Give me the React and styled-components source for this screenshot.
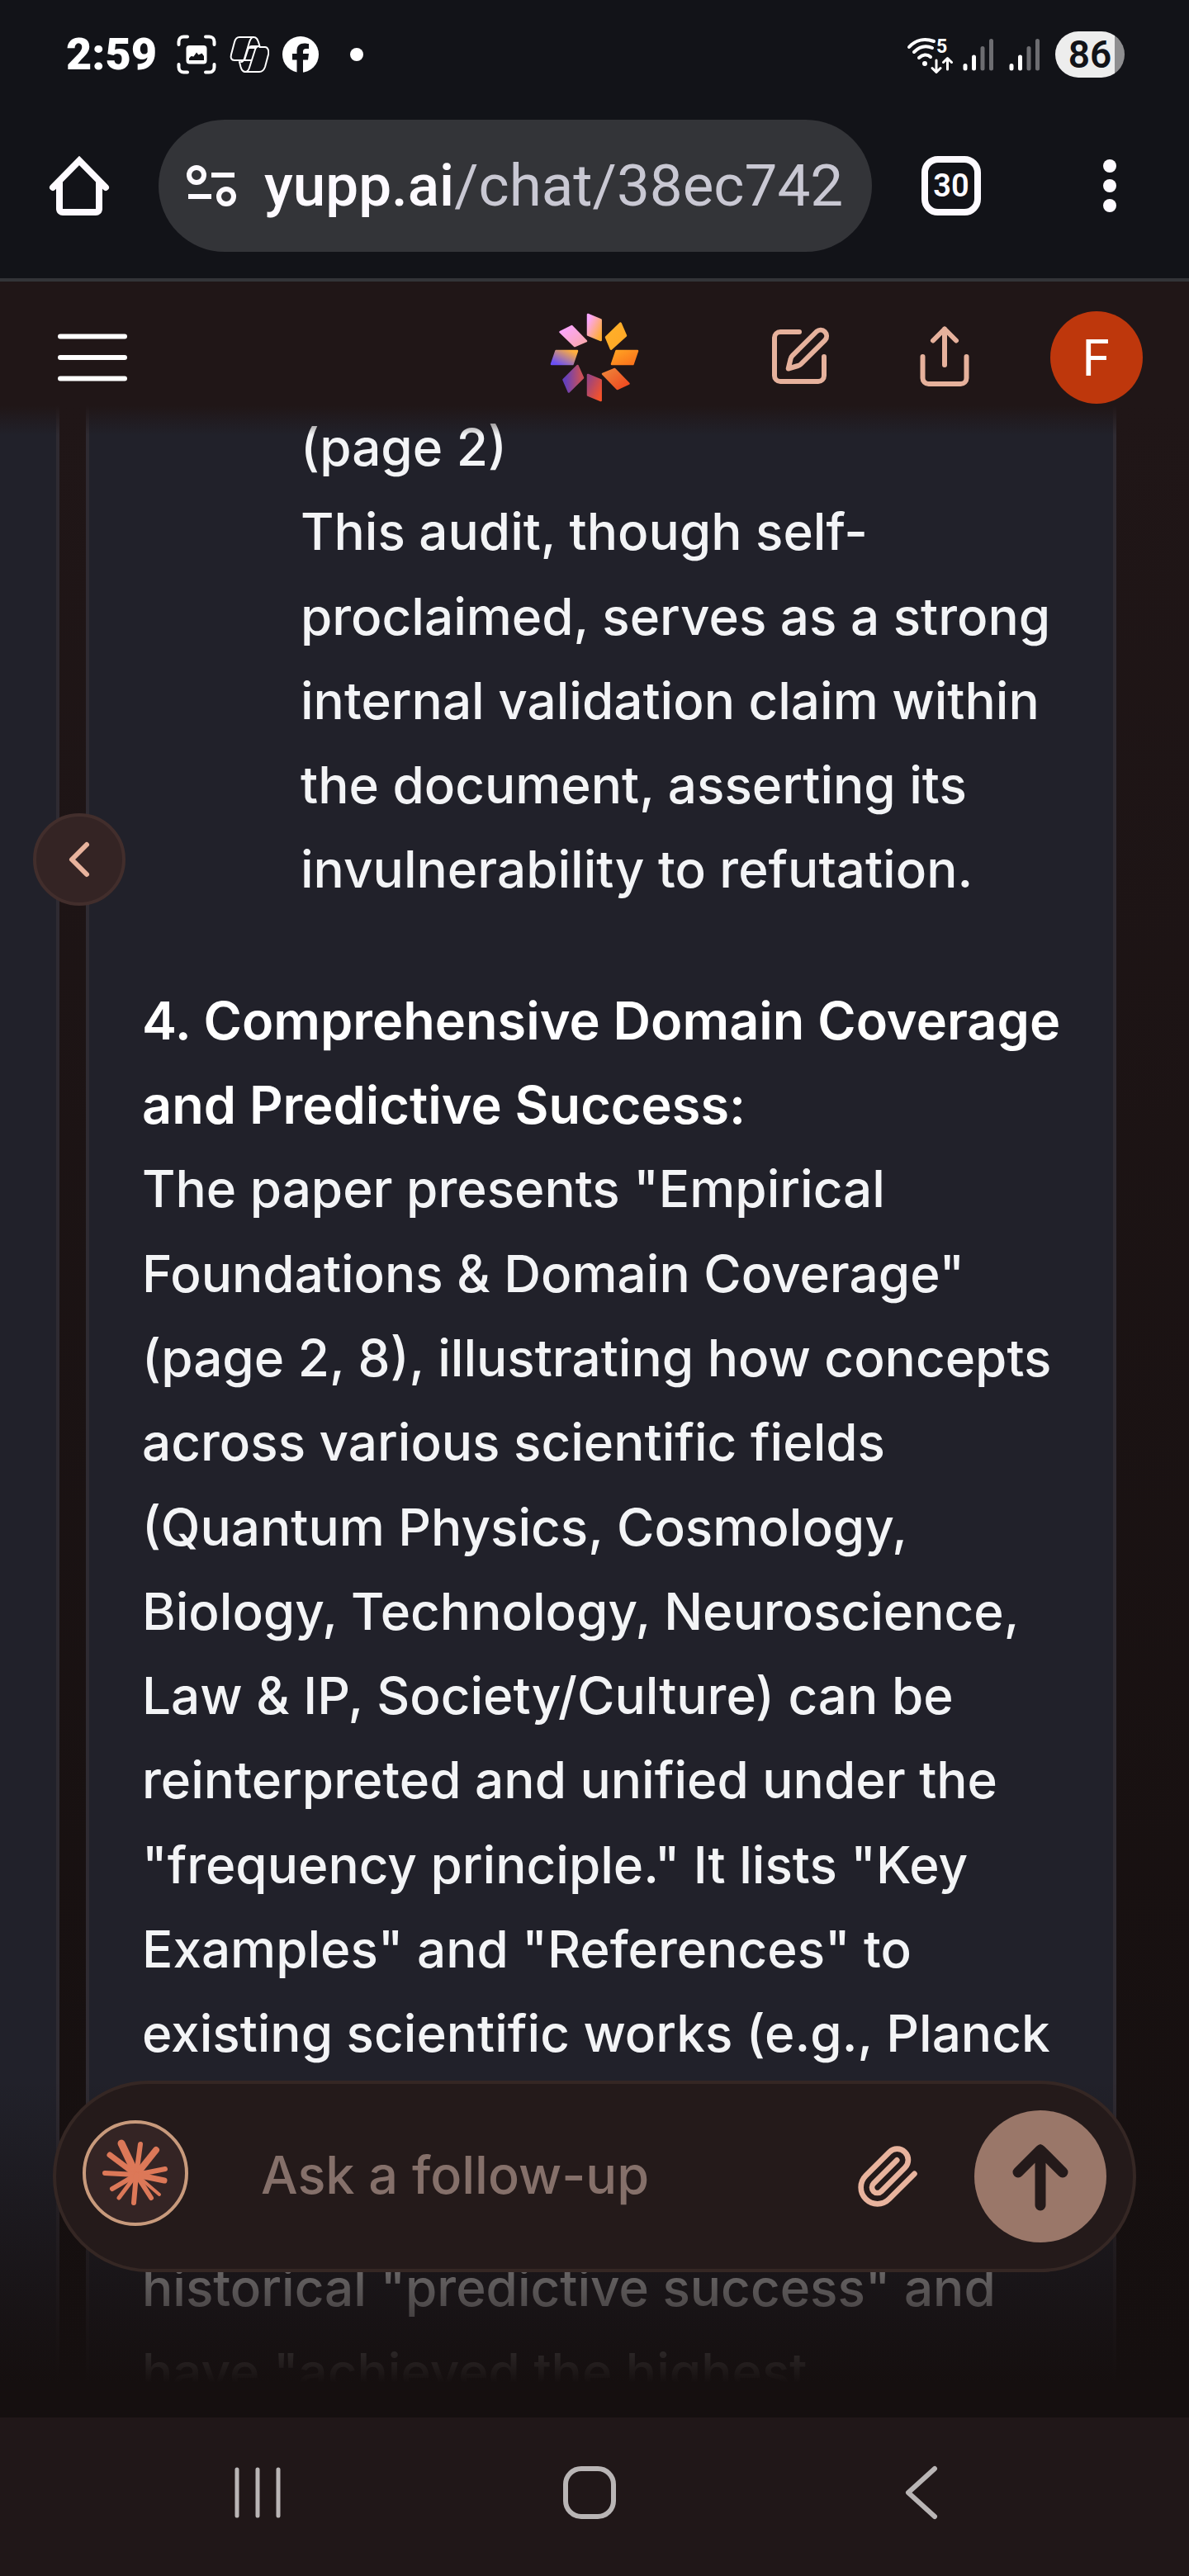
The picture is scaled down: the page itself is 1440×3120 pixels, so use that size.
import React from 'react';
import styled, { createGlobalStyle } from 'styled-components';

const GlobalStyle = createGlobalStyle`
  *, *::before, *::after { box-sizing: border-box; }
  body {
    margin: 0;
    background: #121318;
    color: #f3f4f6;
    font-family: Inter, "Liberation Sans", sans-serif;
  }
  p, h3 { margin: 0; }
  svg { display: block; }
`;

const Screen = styled.div`
  display: flex;
  flex-direction: column;
  min-height: 100vh;
  background: #121318;
`;

/* Status bar */

const StatusBar = styled.div`
  display: flex;
  align-items: center;
  justify-content: space-between;
  height: 132px;
  padding: 0 78px 0 80px;
  color: #ffffff;
  font-family: Roboto, sans-serif;
`;

const StatusGroup = styled.div`
  display: flex;
  align-items: center;
  gap: ${(p) => p.$gap}px;
`;

const Clock = styled.span`
  width: 118px;
  font-size: 54px;
  line-height: 64px;
  font-weight: 900;
`;

const Battery = styled.span`
  display: flex;
  align-items: center;
  justify-content: center;
  width: 84px;
  height: 56px;
  border-radius: 28px;
  background: linear-gradient(90deg, #ededed 72px, #8e8e90 72px);
  color: #121318;
  font-size: 46px;
  line-height: 56px;
  font-weight: 600;
`;

/* Browser toolbar */

const Toolbar = styled.div`
  display: flex;
  align-items: center;
  padding: 13px 0 32px;
  border-bottom: 4px solid #333438;
`;

const PlainButton = styled.button`
  display: flex;
  align-items: center;
  justify-content: center;
  padding: 0;
  border: 0;
  background: none;
  color: inherit;
  font: inherit;
`;

const ToolbarButton = styled(PlainButton)`
  flex: 0 0 192px;
  height: 160px;
  color: #fdfaff;
`;

const TabCount = styled.span`
  display: flex;
  align-items: center;
  justify-content: center;
  width: 72px;
  height: 72px;
  border: 8px solid #fdfaff;
  border-radius: 20px;
  font-family: Roboto, sans-serif;
  font-size: 38px;
  line-height: 48px;
  font-weight: 600;
`;

const AddressBar = styled.div`
  display: flex;
  flex: 1;
  align-items: center;
  gap: 32px;
  min-width: 0;
  height: 160px;
  padding: 0 32px;
  border-radius: 80px;
  background: #333438;
  color: #fdfaff;
`;

const Address = styled.a`
  flex: 1;
  overflow: hidden;
  color: #c9c8d3;
  font-family: Roboto, sans-serif;
  font-size: 71px;
  line-height: 96px;
  white-space: nowrap;
  text-decoration: none;
`;

const Host = styled.span`
  color: #fdfaff;
  font-weight: 500;
`;

/* Site header */

const SiteHeader = styled.header`
  display: grid;
  grid-template-columns: 1fr auto 1fr;
  align-items: center;
  padding: 36px 56px 2px;
  background: #201617;
`;

const HeaderActions = styled.div`
  display: flex;
  align-items: center;
  justify-content: flex-end;
  gap: 84px;
  color: #e6b19c;
`;

const Avatar = styled(PlainButton)`
  width: 112px;
  height: 112px;
  border-radius: 50%;
  background: #be370c;
  color: #ffffff;
  font-size: 60px;
  line-height: 112px;
`;

/* Conversation */

const Conversation = styled.main`
  position: relative;
  display: flex;
  flex: 1;
  gap: 32px;
  padding-right: 88px;
  overflow: hidden;
  background: linear-gradient(#201617, #150f0f);

  &::before {
    content: "";
    position: absolute;
    inset: 0 0 auto 0;
    height: 36px;
    background: linear-gradient(#201617, #20161700);
  }
`;

const PreviousCard = styled.div`
  flex: 0 0 72px;
  border-right: 4px solid #2f2b32;
  background: #21212a;
`;

const AnswerCard = styled.article`
  flex: 1;
  min-width: 0;
  padding: 0 0 0 64px;
  border: solid #2f2b32;
  border-width: 0 4px;
  background: #21212a;
  font-size: 62px;
  line-height: 1.65em;
  font-weight: 500;
  white-space: nowrap;
`;

const NestedText = styled.p`
  margin: 0 0 80px 192px;
`;

const PointTitle = styled.h3`
  color: #ffffff;
  font-size: 63px;
  font-weight: 600;
`;

const LaterText = styled.p`
  margin-top: 205px;
`;

const PreviousButton = styled(PlainButton)`
  position: absolute;
  top: 494px;
  left: 40px;
  width: 112px;
  height: 112px;
  border: 4px solid #422e2c;
  border-radius: 50%;
  background: #342424;
  color: #e8b39d;
`;

/* Composer */

const ComposerDock = styled.div`
  position: absolute;
  inset: auto 0 0 0;
  padding: 0 64px 176px;
  background: linear-gradient(#150f0f00, #150f0f 366px);
`;

const Composer = styled.form`
  display: flex;
  align-items: center;
  height: 232px;
  padding: 0 32px;
  border: 4px solid #352724;
  border-radius: 116px;
  background: #241a1a;
`;

const ModelButton = styled(PlainButton)`
  flex: none;
  width: 128px;
  height: 128px;
  margin: 0 88px 8px 0;
  border: 4px solid #c89a7c;
  border-radius: 50%;
  background: #342424;
  color: #dc7858;
`;

const Prompt = styled.input`
  flex: 1;
  min-width: 0;
  padding: 0 0 4px;
  border: 0;
  outline: 0;
  background: none;
  color: #f3f4f6;
  font: inherit;
  font-size: 63px;
  font-weight: 500;
  line-height: 96px;

  &::placeholder {
    color: #85706a;
    opacity: 1;
  }
`;

const AttachButton = styled(PlainButton)`
  flex: none;
  margin-right: 64px;
  color: #e8b39d;
`;

const SendButton = styled(PlainButton)`
  flex: none;
  width: 160px;
  height: 160px;
  border-radius: 50%;
  background: #9a7769;
  color: #241a1a;
`;

/* System navigation */

const SystemNav = styled.nav`
  display: grid;
  grid-template-columns: repeat(3, 1fr);
  height: 192px;
  padding: 0 123px 10px 111px;
  background: #201718;
  color: #b9b5b5;
`;

const Lines = ({ lines }) =>
  lines.map((line, i) => (
    <React.Fragment key={line}>
      {i > 0 && <br />}
      {line}
    </React.Fragment>
  ));

const strokeProps = {
  fill: 'none',
  stroke: 'currentColor',
  strokeLinecap: 'round',
  strokeLinejoin: 'round',
};

const CaptureIcon = () => (
  <svg width="48" height="48" viewBox="0 0 48 48" aria-hidden="true">
    <path {...strokeProps} strokeWidth="4" d="M2.500 12V8.500a6 6 0 0 1 6-6H13M35 2.500h4.500a6 6 0 0 1 6 6V12M45.500 36v3.500a6 6 0 0 1-6 6H35M13 45.500H8.500a6 6 0 0 1-6-6V36" />
    <path fill="currentColor" fillRule="evenodd" d="M15.500 13h17a4 4 0 0 1 4 4v14.500a4 4 0 0 1-4 4h-17a4 4 0 0 1-4-4V17a4 4 0 0 1 4-4zM15 31h18v-5l-2.500-3.500-4 2L24 21.500l-3.500 5L17.500 26 15 28.500z" />
  </svg>
);

const CopilotIcon = () => (
  <svg width="48" height="48" viewBox="0 0 48 48" aria-hidden="true">
    <g {...strokeProps} strokeWidth="2">
      <path d="M12 3h17c4 0 5 3 6 6l1.500 5H27c-3 0-4 1.500-5 4.500L18 31H6c-4 0-5-3-4-7l4-15c1-4 3-6 6-6z" />
      <path d="M36 45H19c-4 0-4.500-3-5.500-6L12 33M36 45c4 0 6-3 7-6l4-15c1-5-1-9-4-9h-6.500M36 45H29" />
      <path d="M29 3c-3 0-4 3-5 6l-6 20c-1 3-2 4-4 4M19 45c3 0 4-2 5-5l7-22c1-3 3-4 5-4M24 16h7M18 31h8" />
    </g>
  </svg>
);

const FacebookIcon = () => (
  <svg width="44" height="44" viewBox="0 0 44 44" aria-hidden="true">
    <circle cx="22" cy="22" r="22" fill="currentColor" />
    <path fill="#121318" d="M17.500 45V28.500H12V21h5.500v-3.500c0-6 3.500-9 9-9 2 0 4 .3 5.500.6v6h-3c-3 0-4 1.500-4 3.500V21h7l-1 7.500h-6V45z" />
  </svg>
);

const WifiIcon = () => (
  <svg width="56" height="48" viewBox="0 0 56 48" aria-hidden="true">
    <g {...strokeProps} strokeWidth="4">
      <path d="M3 15C11 6 22 4 33 8M9 21c7-7 15-8 22-5M15 28c4-4 10-5 14-1" />
      <path strokeWidth="3" d="M36 31v14M31 40.500l5 5 5-5M49.500 42V29M44.500 33.500l5-5 5 5" />
    </g>
    <circle cx="22" cy="35" r="3" fill="currentColor" />
    <text x="36" y="22" fill="currentColor" fontFamily="Roboto, sans-serif" fontSize="23" fontWeight="700">5</text>
  </svg>
);

const SignalIcon = () => (
  <svg width="38" height="40" viewBox="0 0 38 40" aria-hidden="true">
    <g {...strokeProps} strokeWidth="5">
      <path d="M3 33.500v3.500M13.500 23v14" />
      <path stroke="#6d6d71" d="M24 12.500V37M34.500 3.500V37" />
    </g>
  </svg>
);

const petals = [
  ['a', 'M48 4 63.700 10.500V35L48 28.500Z'],
  ['b', 'M87.500 14.500 94 29.500 76 45.700 70 31.500Z'],
  ['c', 'M82.500 48H108L102.500 64H77Z'],
  ['d', 'M80.500 70 97.500 87.500 83.500 94 66 75.800Z'],
  ['e', 'M48 77 63.700 83.500V108L48 101.500Z'],
  ['f', 'M35.500 66 42 80.500 24.800 97.500 18.500 83Z'],
  ['g', 'M9.500 48H35L29.500 64H4Z'],
  ['h', 'M28.500 18 46 36 32 42 14.500 25Z'],
];

const gradients = [
  ['a', 0, 0, 1, 1, '#fba6ff', '#ffac36'],
  ['b', 0, 0, 1, 1, '#ffb02a', '#ffa826'],
  ['c', 0, 0, 1, 1, '#ff9f22', '#fa741c'],
  ['d', 0, 0, 1, 1, '#ee8038', '#ef4a20'],
  ['e', 0, 0, 1, 1, '#9a4480', '#f4522a'],
  ['f', 0, 0.5, 1, 0.5, '#6540bb', '#c8505a'],
  ['g', 0, 1, 1, 0, '#6a50f5', '#ffae3c'],
  ['h', 0, 0, 1, 1, '#fba6ff', '#f9a8b0'],
];

const Logo = () => (
  <svg width="112" height="112" viewBox="0 0 112 112" role="img" aria-label="Yupp">
    <defs>
      {gradients.map(([id, x1, y1, x2, y2, from, to]) => (
        <linearGradient key={id} id={`petal-${id}`} x1={x1} y1={y1} x2={x2} y2={y2}>
          <stop offset="0.1" stopColor={from} />
          <stop offset="0.9" stopColor={to} />
        </linearGradient>
      ))}
    </defs>
    {petals.map(([id, d]) => (
      <path key={id} d={d} fill={`url(#petal-${id})`} stroke={`url(#petal-${id})`} strokeWidth="2.500" strokeLinejoin="round" />
    ))}
  </svg>
);

const rays = [
  [47, 28, 9], [70, 29, 6], [89, 36, 8], [33, 42, 7], [100, 59, 6], [99, 73, 7],
  [27, 64, 6], [36, 83, 6], [93, 90, 4], [83, 94, 6], [44, 94, 5], [62, 100, 6],
];

const Starburst = () => (
  <svg width="120" height="120" viewBox="4 4 120 120" aria-hidden="true">
    <circle cx="65" cy="66" r="9" fill="currentColor" />
    {rays.map(([x, y, w]) => (
      <path key={`${x}-${y}`} {...strokeProps} strokeWidth={w} d={`M65 66 ${x} ${y}`} />
    ))}
  </svg>
);

export default function App() {
  return (
    <Screen>
      <GlobalStyle />
      <StatusBar>
        <StatusGroup $gap={16}>
          <Clock>2:59</Clock>
          <CaptureIcon />
          <CopilotIcon />
          <FacebookIcon />
          <svg width="60" height="16" viewBox="0 0 60 16" aria-hidden="true">
            <circle cx="30" cy="8" r="8" fill="currentColor" />
          </svg>
        </StatusGroup>
        <StatusGroup $gap={18}>
          <StatusGroup $gap={12}>
            <WifiIcon />
            <SignalIcon />
          </StatusGroup>
          <SignalIcon />
          <Battery>86</Battery>
        </StatusGroup>
      </StatusBar>

      <Toolbar>
        <ToolbarButton type="button" aria-label="Home">
          <svg width="80" height="80" viewBox="0 0 80 80" aria-hidden="true">
            <path {...strokeProps} strokeWidth="8" strokeLinejoin="miter" d="M8 42 40 9.500 72 42" />
            <path {...strokeProps} strokeWidth="8" d="M16 36V68a4 4 0 0 0 4 4H60a4 4 0 0 0 4-4V36" />
          </svg>
        </ToolbarButton>
        <AddressBar>
          <svg width="64" height="56" viewBox="0 0 64 56" aria-hidden="true">
            <g fill="none" stroke="currentColor" strokeWidth="6">
              <circle cx="14" cy="15" r="9" />
              <circle cx="50" cy="41" r="9" />
              <path d="M32 15H60M4 41H32" />
            </g>
          </svg>
          <Address href="#"><Host>yupp.ai</Host>/chat/38ec7423</Address>
        </AddressBar>
        <ToolbarButton type="button" aria-label="Open tabs">
          <TabCount>30</TabCount>
        </ToolbarButton>
        <ToolbarButton type="button" aria-label="More options">
          <svg width="64" height="64" viewBox="0 0 64 64" fill="currentColor" aria-hidden="true">
            <circle cx="32" cy="8" r="8" />
            <circle cx="32" cy="32" r="8" />
            <circle cx="32" cy="56" r="8" />
          </svg>
        </ToolbarButton>
      </Toolbar>

      <SiteHeader>
        <div>
          <PlainButton type="button" aria-label="Menu">
            <svg width="112" height="112" viewBox="0 0 112 112" aria-hidden="true">
              <path fill="none" stroke="#ffffff" strokeWidth="6" strokeLinecap="round" d="M17 30.500H95M17 56H95M17 81.500H95" />
            </svg>
          </PlainButton>
        </div>
        <Logo />
        <HeaderActions>
          <PlainButton type="button" aria-label="New chat">
            <svg width="88" height="88" viewBox="0 0 88 88" aria-hidden="true">
              <g {...strokeProps} strokeWidth="6">
                <path d="M40 13H17a7 7 0 0 0-7 7V66a7 7 0 0 0 7 7H63a7 7 0 0 0 7-7V43" />
                <path d="M26.700 57.500 29.500 46Q30 43.500 31.800 41.700L61 12.500A7.300 7.300 0 0 1 71.300 22.800L42 52Q40.500 53.500 38.500 54Z" />
              </g>
            </svg>
          </PlainButton>
          <PlainButton type="button" aria-label="Share">
            <svg width="88" height="88" viewBox="0 0 88 88" aria-hidden="true">
              <path {...strokeProps} strokeWidth="6" d="M17.500 43V69a7 7 0 0 0 7 7H63.500a7 7 0 0 0 7-7V43M44 53V9.500M30 23.500l14-14 14 14" />
            </svg>
          </PlainButton>
          <Avatar type="button" aria-label="Account">F</Avatar>
        </HeaderActions>
      </SiteHeader>

      <Conversation>
        <PreviousCard />
        <AnswerCard>
          <NestedText>
            <Lines
              lines={[
                '(page 2)',
                'This audit, though self-',
                'proclaimed, serves as a strong',
                'internal validation claim within',
                'the document, asserting its',
                'invulnerability to refutation.',
              ]}
            />
          </NestedText>
          <PointTitle>
            <Lines lines={['4. Comprehensive Domain Coverage', 'and Predictive Success:']} />
          </PointTitle>
          <p>
            <Lines
              lines={[
                'The paper presents "Empirical',
                'Foundations & Domain Coverage"',
                '(page 2, 8), illustrating how concepts',
                'across various scientific fields',
                '(Quantum Physics, Cosmology,',
                'Biology, Technology, Neuroscience,',
                'Law & IP, Society/Culture) can be',
                'reinterpreted and unified under the',
                '"frequency principle." It lists "Key',
                'Examples" and "References" to',
                'existing scientific works (e.g., Planck',
              ]}
            />
          </p>
          <LaterText>
            <Lines lines={['historical "predictive success" and', 'have "achieved the highest']} />
          </LaterText>
        </AnswerCard>

        <ComposerDock>
          <Composer onSubmit={(event) => event.preventDefault()}>
            <ModelButton type="button" aria-label="Choose model">
              <Starburst />
            </ModelButton>
            <Prompt type="text" placeholder="Ask a follow-up" aria-label="Ask a follow-up" />
            <AttachButton type="button" aria-label="Attach file">
              <svg width="80" height="80" viewBox="0 0 24 24" aria-hidden="true">
                <path {...strokeProps} strokeWidth="2" d="m21.440 11.050-9.190 9.190a6 6 0 0 1-8.490-8.490l8.570-8.570A4 4 0 1 1 18 8.840l-8.590 8.570a2 2 0 0 1-2.830-2.830l8.490-8.480" />
              </svg>
            </AttachButton>
            <SendButton type="submit" aria-label="Send">
              <svg width="96" height="96" viewBox="0 0 96 96" aria-hidden="true">
                <path {...strokeProps} strokeWidth="13" d="M48 83V16M21 43l27-27 27 27" />
              </svg>
            </SendButton>
          </Composer>
        </ComposerDock>

        <PreviousButton type="button" aria-label="Previous answer">
          <svg width="48" height="48" viewBox="0 0 48 48" aria-hidden="true">
            <path {...strokeProps} strokeWidth="6" d="M33 6 15 24l18 18" />
          </svg>
        </PreviousButton>
      </Conversation>

      <SystemNav>
        <PlainButton type="button" aria-label="Recent apps">
          <svg width="72" height="72" viewBox="0 0 72 72" aria-hidden="true">
            <path {...strokeProps} strokeWidth="5" d="M11 8V64M36 8V64M61 8V64" />
          </svg>
        </PlainButton>
        <PlainButton type="button" aria-label="Home screen">
          <svg width="72" height="72" viewBox="0 0 72 72" aria-hidden="true">
            <rect {...strokeProps} strokeWidth="6" x="7" y="7" width="58" height="58" rx="19" />
          </svg>
        </PlainButton>
        <PlainButton type="button" aria-label="Back">
          <svg width="72" height="72" viewBox="0 0 72 72" aria-hidden="true">
            <path {...strokeProps} strokeWidth="6" d="M52 7 20 36l32 29" />
          </svg>
        </PlainButton>
      </SystemNav>
    </Screen>
  );
}
